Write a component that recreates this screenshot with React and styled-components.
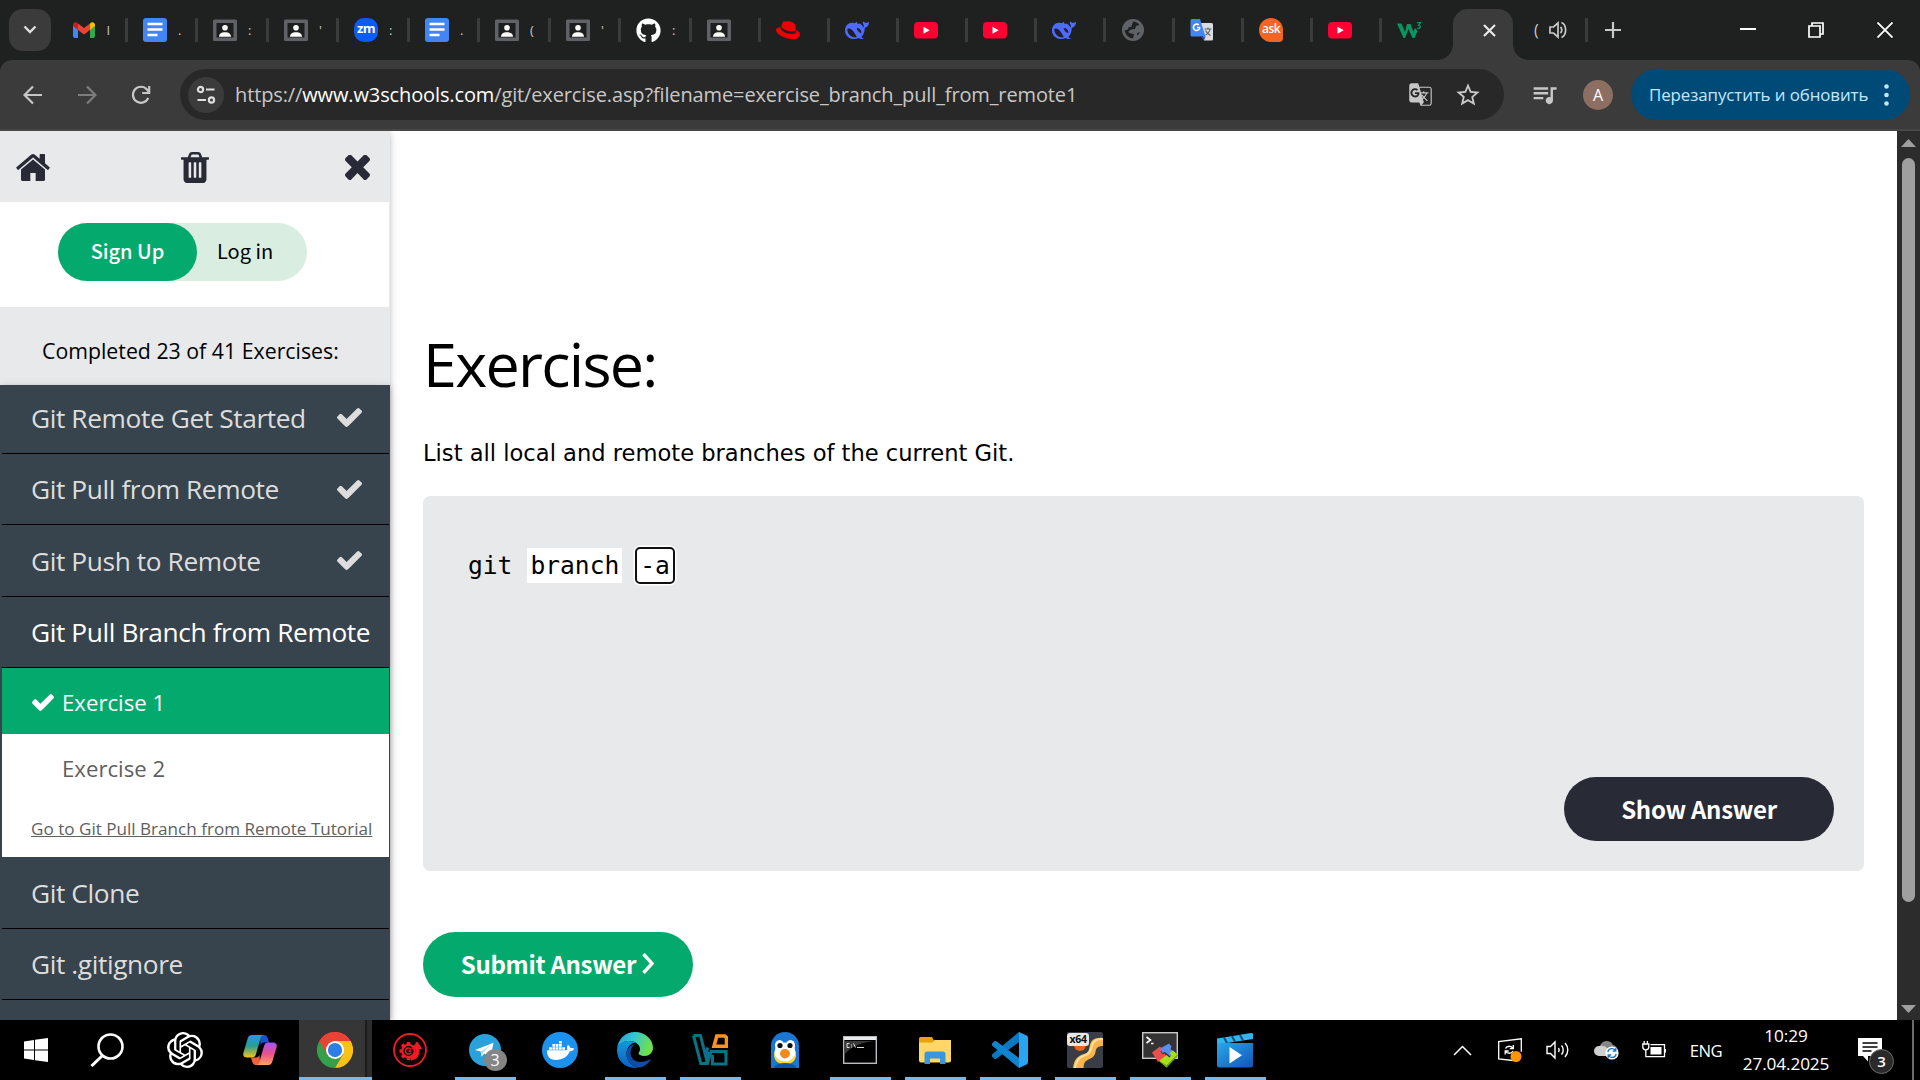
import React from 'react';
import styled, { createGlobalStyle, css } from 'styled-components';
import { FaGithub, FaRedhat, FaDocker } from 'react-icons/fa';
import { MdQueueMusic, MdStarBorder, MdOutlineGTranslate } from 'react-icons/md';
import { SiOpenai } from 'react-icons/si';
import * as Si from 'react-icons/si';

const UI = "'Open Sans', 'Noto Sans', sans-serif";
const SOURCE = "'Noto Sans CJK SC', 'Open Sans', sans-serif";
const GREEN = '#04aa6d';

const Global = createGlobalStyle`
  *, *::before, *::after { box-sizing: border-box; }
  html, body { margin: 0; padding: 0; overflow: hidden; background: #000; }
  svg { display: block; flex: none; }
`;

const Screen = styled.div`
  width: 1920px;
  height: 1080px;
  display: flex;
  flex-direction: column;
  overflow: hidden;
  font-family: ${UI};
  background: #1f2120;
`;

/* ---------- tab strip ---------- */

const TabStrip = styled.div`
  height: 60px;
  flex: none;
  display: flex;
  align-items: center;
  padding-left: 9px;
  background: #1f2120;
`;

const TabSearch = styled.div`
  width: 42px;
  height: 42px;
  margin-right: 5.5px;
  border-radius: 14px;
  background: #3b3b3b;
  display: flex;
  align-items: center;
  justify-content: center;
`;

const Tab = styled.div`
  width: ${(p) => p.$w}px;
  height: 24px;
  flex: none;
  display: flex;
  align-items: center;
  padding-left: 15px;
  border-right: 3px solid ${(p) => (p.$last ? 'transparent' : '#3b3b3b')};
`;

const TabHint = styled.span`
  width: 4px;
  margin-left: 11px;
  overflow: hidden;
  font-size: 13px;
  line-height: 24px;
  color: #c8c8c8;
`;

const ActiveTab = styled.div`
  width: 60px;
  height: 51px;
  margin: 9px 0 0 2.5px;
  flex: none;
  position: relative;
  display: flex;
  align-items: center;
  justify-content: flex-end;
  padding: 0 17px 9px 0;
  border-radius: 15px 15px 0 0;
  background: #3b3b3b;
  &::before, &::after {
    content: '';
    position: absolute;
    bottom: 0;
    width: 15px;
    height: 15px;
  }
  &::before { left: -15px; background: radial-gradient(circle at 0 0, transparent 14.5px, #3b3b3b 15px); }
  &::after { right: -15px; background: radial-gradient(circle at 100% 0, transparent 14.5px, #3b3b3b 15px); }
`;

const AudioTab = styled.div`
  width: 75px;
  height: 24px;
  flex: none;
  display: flex;
  align-items: center;
  padding-left: 21px;
  gap: 10px;
  border-right: 3px solid #3b3b3b;
  color: #c8c8c8;
  font-size: 16px;
`;

const NewTab = styled.div`
  width: 49px;
  display: flex;
  justify-content: center;
`;

const WindowControls = styled.div`
  margin-left: auto;
  margin-right: 1px;
  display: flex;
  align-items: center;
`;

const WinButton = styled.div`
  width: 68.5px;
  display: flex;
  justify-content: center;
`;

/* ---------- toolbar ---------- */

const Toolbar = styled.div`
  height: 71px;
  flex: none;
  display: flex;
  align-items: center;
  padding: 0 10px 0 6px;
  border-radius: 12px 12px 0 0;
  border-bottom: 2px solid #474747;
  background: #3b3b3b;
`;

const NavButton = styled.div`
  width: 54px;
  display: flex;
  justify-content: center;
`;

const Omnibox = styled.div`
  width: 1324px;
  height: 51px;
  margin-left: 12px;
  padding-left: 8px;
  border-radius: 26px;
  background: #282828;
  display: flex;
  align-items: center;
`;

const SiteInfo = styled.div`
  width: 36px;
  height: 36px;
  border-radius: 50%;
  background: #3b3b3b;
  display: flex;
  align-items: center;
  justify-content: center;
`;

const Url = styled.div`
  margin-left: 11px;
  font-size: 20px;
  line-height: 28px;
  letter-spacing: -0.125px;
  white-space: pre;
  color: #c7c7c7;
  b { font-weight: 400; color: #fff; }
`;

const OmniActions = styled.div`
  margin-left: auto;
  margin-right: 22px;
  display: flex;
  align-items: center;
  gap: 20px;
  color: #c7c7c7;
`;

const MediaButton = styled.div`
  margin-left: 26px;
  color: #c7c7c7;
`;

const Avatar = styled.div`
  width: 30px;
  height: 30px;
  margin-left: 24px;
  border-radius: 50%;
  background: #8d6e63;
  color: #fff;
  font-size: 16px;
  display: flex;
  align-items: center;
  justify-content: center;
`;

const RestartButton = styled.div`
  width: 279px;
  height: 51px;
  margin-left: auto;
  padding: 0 21px 0 18px;
  border-radius: 26px;
  background: #004a77;
  color: #c2e7ff;
  font-size: 16.9px;
  letter-spacing: -0.1px;
  white-space: nowrap;
  display: flex;
  align-items: center;
  justify-content: space-between;
`;

/* ---------- page ---------- */

const Page = styled.div`
  height: 889px;
  flex: none;
  display: flex;
  overflow: hidden;
  background: #fff;
`;

const Sidebar = styled.aside`
  width: 390px;
  flex: none;
  z-index: 1;
  display: flex;
  flex-direction: column;
  background: #e7e9eb;
  box-shadow: 0 2px 5px rgba(0, 0, 0, 0.16), 0 2px 10px rgba(0, 0, 0, 0.12);
`;

const SidebarTop = styled.div`
  height: 71px;
  flex: none;
  display: flex;
  align-items: center;
  justify-content: space-between;
  padding: 1px 20px 0 16px;
  color: #282a35;
  svg:nth-child(2) { margin-left: -5px; }
`;

const Auth = styled.div`
  height: 105px;
  flex: none;
  display: flex;
  padding: 21px 0 0 58px;
  margin-right: 1px;
  background: #fff;
  font-family: ${SOURCE};
  font-size: 20px;
  line-height: 55px;
`;

const AuthPill = styled.div`
  width: 249px;
  height: 58px;
  display: flex;
  border-radius: 29px;
  background: #d9eee1;
  color: #000;
`;

const SignUp = styled.div`
  width: 139px;
  border-radius: 29px;
  text-align: center;
  font-weight: 500;
  background: ${GREEN};
  color: #fff;
`;

const LogIn = styled.div`
  padding-left: 20px;
`;

const Progress = styled.div`
  height: 78px;
  flex: none;
  padding: 27px 0 0 42px;
  font-size: 21.3px;
  line-height: 34px;
  white-space: nowrap;
`;

const Menu = styled.div`
  flex: 1;
  padding: 0 1px 0 2px;
  background: #38444d;
  box-shadow: 0 2px 5px rgba(0, 0, 0, 0.16), 0 2px 10px rgba(0, 0, 0, 0.12);
`;

const MenuItem = styled.div`
  height: ${(p) => p.$h}px;
  display: flex;
  align-items: center;
  justify-content: space-between;
  padding: 0 27px 0 29px;
  border-bottom: 1px solid #000;
  font-size: 26.3px;
  letter-spacing: -0.4px;
  white-space: nowrap;
  color: ${(p) => (p.$open ? '#fff' : '#ddd')};
  &:first-child { padding-bottom: 3px; }
`;

const SubItem = styled.div`
  height: 66px;
  display: flex;
  align-items: center;
  padding: 2px 0 0 ${(p) => (p.$active ? 30 : 60)}px;
  gap: 8px;
  font-size: 22.2px;
  background: ${(p) => (p.$active ? GREEN : '#fff')};
  color: ${(p) => (p.$active ? '#fff' : '#5f5f5f')};
`;

const TutorialLink = styled.div`
  height: 57px;
  padding: 12px 0 0 29px;
  background: #fff;
  color: #5f5f5f;
  font-size: 17.1px;
  line-height: 33px;
  text-decoration: underline;
  white-space: nowrap;
`;

const Main = styled.main`
  flex: 1;
  display: flex;
  flex-direction: column;
  padding: 193px 33px 0 33px;
`;

const Title = styled.h1`
  margin: 0;
  font-size: 61px;
  font-weight: 400;
  line-height: 80px;
  letter-spacing: -1.7px;
`;

const Task = styled.p`
  margin: 31px 0 25px;
  font-family: 'DejaVu Sans', sans-serif;
  font-size: 22.6px;
  line-height: 36px;
`;

const CodeBox = styled.div`
  height: 375px;
  flex: none;
  display: flex;
  flex-direction: column;
  justify-content: space-between;
  padding: 50px 30px 30px 45px;
  border-radius: 7px;
  background: #e7e9eb;
`;

const CodeLine = styled.div`
  height: 38px;
  display: flex;
  align-items: center;
  gap: 15px;
  font-family: 'DejaVu Sans Mono', monospace;
  font-size: 24.6px;
  line-height: 35px;
`;

const Blank = styled.span`
  padding: 0 3px;
  background: #fff;
  ${(p) => p.$focus && css`
    margin-left: -2px;
    padding: 0 3px;
    line-height: 33px;
    border: 2px solid #101010;
    border-radius: 5px;
    box-shadow: 0 0 0 1.5px #fff;
  `}
`;

const PillButton = styled.div`
  width: 270px;
  height: ${(p) => p.$h}px;
  display: flex;
  align-items: center;
  justify-content: center;
  align-self: ${(p) => p.$align};
  gap: 6px;
  padding-bottom: 2px;
  border-radius: 33px;
  background: ${(p) => p.$bg};
  color: #fff;
  font-family: ${SOURCE};
  font-size: 24px;
  font-weight: 700;
  letter-spacing: -0.3px;
  margin-top: ${(p) => p.$top || 0}px;
`;

const Scrollbar = styled.div`
  width: 23px;
  flex: none;
  display: flex;
  flex-direction: column;
  align-items: center;
  padding: 8px 0 7px;
  background: #2c2c2c;
`;

const Thumb = styled.div`
  width: 13px;
  height: 744px;
  margin: 11px 0 auto;
  border-radius: 7px;
  background: #9f9f9f;
`;

/* ---------- taskbar ---------- */

const Taskbar = styled.div`
  height: 60px;
  flex: none;
  display: flex;
  background: #000;
  color: #fff;
`;

const Slot = styled.div`
  width: ${(p) => p.$w || 75}px;
  height: 60px;
  flex: none;
  position: relative;
  display: flex;
  align-items: center;
  justify-content: center;
  ${(p) => p.$running && css`
    &::after {
      content: '';
      position: absolute;
      left: 7px;
      right: 7px;
      bottom: 0;
      height: 3px;
      background: #76b9ed;
    }
  `}
`;

const SearchSlot = styled(Slot)`
  padding-right: 5px;
`;

const FocusedSlot = styled.div`
  width: 73px;
  height: 60px;
  margin: 0 1px;
  flex: none;
  display: flex;
  align-items: center;
  padding-left: 18px;
  border-bottom: 3px solid #76b9ed;
  background: linear-gradient(90deg, #363636 66px, #1c1c1c 66px 68px, #2c2c2c 68px);
  svg { margin-top: 3px; }
`;

const CountBadge = styled.div`
  position: absolute;
  right: 16px;
  bottom: 9px;
  width: 23px;
  height: 22px;
  border-radius: 50%;
  background: #858585;
  font-size: 16px;
  line-height: 22px;
  text-align: center;
`;

const Tray = styled.div`
  margin-left: auto;
  display: flex;
  align-items: center;
`;

const TrayIcon = styled.div`
  width: 48px;
  display: flex;
  justify-content: center;
`;

const Lang = styled.div`
  width: 56px;
  text-align: center;
  font-size: 16.7px;
  letter-spacing: -0.5px;
`;

const Clock = styled.div`
  width: 104px;
  display: flex;
  flex-direction: column;
  text-align: center;
  font-size: 17.2px;
  line-height: 28px;
  letter-spacing: -0.1px;
`;

const Notice = styled.div`
  width: 74px;
  height: 60px;
  position: relative;
  padding: 18px 0 0 20px;
`;

const NoticeBadge = styled.div`
  position: absolute;
  left: 31px;
  top: 29px;
  width: 25px;
  height: 25px;
  border-radius: 50%;
  border: 1px solid #6b6b6b;
  background: #2a2a2a;
  font-size: 15px;
  font-weight: 600;
  line-height: 23px;
  text-align: center;
`;

const DesktopEdge = styled.div`
  width: 8px;
  height: 60px;
  border-left: 2px solid #6b6b6b;
`;

/* ---------- icons ---------- */

const Stroke = ({ w = 24, h = 24, sw = 2, c = '#fff', d, vb }) => (
  <svg width={w} height={h} viewBox={vb || `0 0 ${w} ${h}`} fill="none" stroke={c} strokeWidth={sw}>
    <path d={d} />
  </svg>
);

const FA_PATHS = {
  home: 'M1472 992v480q0 26-19 45t-45 19h-384v-384h-256v384h-384q-26 0-45-19t-19-45v-480q0-1 .5-3t.5-3l575-474 575 474q1 2 1 6zm223-69l-62 74q-8 9-21 11h-3q-13 0-21-7l-692-577-692 577q-12 8-24 7-13-2-21-11l-62-74q-8-10-7-23.5t11-21.5l719-599q32-26 76-26t76 26l244 204v-195q0-14 9-23t23-9h192q14 0 23 9t9 23v408l219 182q10 8 11 21.5t-7 23.5z',
  trash: 'M704 1376v-704q0-14-9-23t-23-9h-64q-14 0-23 9t-9 23v704q0 14 9 23t23 9h64q14 0 23-9t9-23zm256 0v-704q0-14-9-23t-23-9h-64q-14 0-23 9t-9 23v704q0 14 9 23t23 9h64q14 0 23-9t9-23zm256 0v-704q0-14-9-23t-23-9h-64q-14 0-23 9t-9 23v704q0 14 9 23t23 9h64q14 0 23-9t9-23zm-544-992h448l-48-117q-7-9-17-11h-317q-10 2-17 11zm928 32v64q0 14-9 23t-23 9h-96v948q0 83-47 143.5t-113 60.5h-832q-66 0-113-58.5t-47-141.5v-952h-96q-14 0-23-9t-9-23v-64q0-14 9-23t23-9h309l70-167q15-37 54-63t79-26h320q40 0 79 26t54 63l70 167h309q14 0 23 9t9 23z',
  times: 'M1490 1322q0 40-28 68l-136 136q-28 28-68 28t-68-28l-294-294-294 294q-28 28-68 28t-68-28l-136-136q-28-28-28-68t28-68l294-294-294-294q-28-28-28-68t28-68l136-136q28-28 68-28t68 28l294 294 294-294q28-28 68-28t68 28l136 136q28 28 28 68t-28 68l-294 294 294 294q28 28 28 68z',
  check: 'M1671 566q0 40-28 68l-724 724-136 136q-28 28-68 28t-68-28l-136-136-362-362q-28-28-28-68t28-68l136-136q28-28 68-28t68 28l294 295 656-657q28-28 68-28t68 28l136 136q28 28 28 68z',
};
const FA_BOXES = {
  home: '80 253 1632 1283',
  trash: '192 128 1408 1536',
  times: '302 384 1188 1170',
  check: '121 334 1550 1188',
};
const Fa = ({ name, w, h }) => (
  <svg width={w} height={h} viewBox={FA_BOXES[name]} fill="currentColor" preserveAspectRatio="none">
    <path d={FA_PATHS[name]} />
  </svg>
);

const Gmail = () => (
  <svg width="24" height="24" viewBox="0 0 24 24">
    <path d="M1 7.5V18a2 2 0 0 0 2 2h3V10z" fill="#4285f4" />
    <path d="M18 10v10h3a2 2 0 0 0 2-2V7.500z" fill="#34a853" />
    <path d="M6 5.500v6.500l6 4.500 6-4.500V5.500l-6 4.500z" fill="#ea4335" />
    <path d="M1 7v1l5 4V5.500L5 4.700C3.300 3.400 1 4.700 1 7z" fill="#c5221f" />
    <path d="M23 7v1l-5 4V5.500l1-.8C20.700 3.400 23 4.700 23 7z" fill="#fbbc04" />
  </svg>
);
const Docs = () => (
  <svg width="24" height="24" viewBox="0 0 24 24">
    <rect width="24" height="24" rx="3" fill="#4285f4" />
    <path d="M4.500 6h15M4.500 11.500h15M4.500 17h10" stroke="#fff" strokeWidth="2.300" />
  </svg>
);
const Contact = () => (
  <svg width="24" height="24" viewBox="0 0 24 24">
    <rect x="0" y="1.500" width="24" height="21.500" rx="1.500" fill="#5f6368" />
    <rect x="3.500" y="5" width="17" height="14.500" fill="#1d1f1f" />
    <circle cx="12" cy="9.800" r="2.800" fill="#fff" />
    <path d="M6 18.700c0-3.200 2.600-4.500 6-4.500s6 1.300 6 4.500z" fill="#fff" />
  </svg>
);
const ZmBadge = styled.div`
  width: 24px;
  height: 24px;
  flex: none;
  border-radius: 10px;
  background: #0b5cff;
  color: #fff;
  font: 700 13px/21px ${UI};
  letter-spacing: -0.6px;
  text-align: center;
`;
const AskBadge = styled(ZmBadge)`
  border-radius: 12px 12px 4px 12px;
  background: #f26522;
  font-size: 12px;
  font-weight: 600;
`;
const YouTube = () => (
  <svg width="24" height="24" viewBox="0 0 24 24">
    <rect y="4" width="24" height="16.500" rx="4" fill="#ff0033" />
    <path d="M9.500 8.700v7l6.200-3.500z" fill="#fff" />
  </svg>
);
const Whale = () => (Si.SiDeepseek ? <Si.SiDeepseek size={24} color="#4d6bfe" /> : (
  <svg width="24" height="24" viewBox="0 0 24 24">
    <path d="M14.500 5.500c2 1 3 2.200 4 4 .6-1 .5-2-.3-3.200-.6-1-.4-2 0-3 1 1.200 2 1.700 3 1.700 1 0 2-.5 2.800-1.200.2 3-1.500 5.500-4.200 5.900 0 4-1.200 7-3.500 9.300.8.8 1.700 1.200 2.600 1.500-2 1-4 .5-5.200-.4C7.500 23 0 19.500 0 12.500 0 6.500 5 3.500 9.500 5.200l2.500-1.400c-.2 1 .2 1.700 1 2.200z" fill="#4d6bfe" />
    <path d="M2.300 11c4-2 7 3.500 9.500 8.200C6.500 20 2.300 16.500 2.300 11z" fill="#1f2120" />
    <path d="M11.500 10.500c2.500-.8 5 1.500 4.800 4.500-1.200.2-3.800-2-4.800-4.500z" fill="#1f2120" />
  </svg>
));
const Globe = () => (
  <svg width="24" height="24" viewBox="0 0 24 24">
    <circle cx="12" cy="12" r="11" fill="#5f6368" />
    <path d="M12 3.500c2.500 0 5 1.500 6.500 3.500l-3.500 1-1 3-4 .5L7 14l3 1.500 3 .5-1 4.500c-4-.5-8-3.500-8.500-8.500 2 .5 4-.5 4-2.500l3-1zM16 15l3-1-2.500 4z" fill="#1f2120" />
  </svg>
);
const GoogleTranslate = () => (
  <svg width="24" height="24" viewBox="0 0 24 24">
    <path d="M10 5h11.500A1.500 1.500 0 0 1 23 6.500V21a1.500 1.500 0 0 1-1.500 1.500H14z" fill="#dadce0" />
    <path d="M2 1h8l5.500 17.500H2A1.500 1.500 0 0 1 .5 17V2.500A1.500 1.500 0 0 1 2 1z" fill="#4285f4" />
    <path d="M15.500 18.500H11l3 4z" fill="#3749ab" />
    <path d="M9.800 9.500H7M9.800 9.500A3.200 3.200 0 1 1 8.800 7" stroke="#fff" strokeWidth="1.600" fill="none" />
    <path d="M14.500 11h7M18 9.500V11M20 11c-.5 3-2.500 5-4.500 6M15.500 12.500c1 2 2.500 3.500 5 5" stroke="#5f6368" strokeWidth="1.200" fill="none" />
  </svg>
);
const W3 = () => (
  <svg width="25" height="24" viewBox="0 0 25 24">
    <path d="M0 5.500h4.500l3.500 8.500 2-8h3.500l3 8 1.500-4 2.500 3L17.500 20h-2l-4-9-3.500 9H6.500z" fill="#059862" />
    <path d="M20 4.700h3.300l-1.700 2.600c3 .3 2 4-1.500 3" stroke="#059862" strokeWidth="1.300" fill="none" />
  </svg>
);
const Speaker = () => (
  <svg width="19" height="18" viewBox="0 0 19 18" fill="none" stroke="#c8c8c8" strokeWidth="1.700">
    <path d="M1 6v6h3.500L9 16V2L4.500 6z" />
    <path d="M11.500 6c1.700 1.500 1.700 4.500 0 6M12.500 1.500c5.500 2.500 5.500 12.500 0 15" />
  </svg>
);
const Tune = () => (
  <svg width="20" height="20" viewBox="0 0 20 20" fill="none" stroke="#dedede" strokeWidth="2.200">
    <circle cx="4.500" cy="4.500" r="2.600" />
    <path d="M10 4.500h8.500M1.500 15H10" />
    <circle cx="15.500" cy="15" r="2.600" />
  </svg>
);
const Arrow = ({ flip, c }) => (
  <svg width="20" height="20" viewBox="0 0 20 20" fill="none" stroke={c} strokeWidth="2.200" transform={flip ? 'scale(-1 1)' : undefined}>
    <path d="M19 10H2M10 1.500L1.500 10l8.500 8.500" />
  </svg>
);
const Reload = () => (
  <svg width="20" height="20" viewBox="0 0 20 20" fill="none" stroke="#c7c7c7" strokeWidth="2.200">
    <path d="M17.300 13A8 8 0 1 1 16 4.500l2 2.500" />
    <path d="M18.200 1v7h-7" />
  </svg>
);
const Windows = () => (
  <svg width="24" height="24" viewBox="0 0 24 24" fill="#fff">
    <path d="M0 3.400l10-1.400v9.500H0zM11 1.800L24 0v11.500H11zM0 12.500h10V22L0 20.600zM11 12.500h13V24l-13-1.800z" />
  </svg>
);
const Copilot = () => (
  <svg width="34" height="32" viewBox="0 0 34 32">
    <defs>
      <linearGradient id="cpA" x1="0" y1="0" x2="0" y2="1">
        <stop offset="0" stopColor="#1d9bf0" /><stop offset=".5" stopColor="#2a9d8f" /><stop offset="1" stopColor="#f5c518" />
      </linearGradient>
      <linearGradient id="cpB" x1="0" y1="0" x2="0" y2="1">
        <stop offset="0" stopColor="#a855f7" /><stop offset=".5" stopColor="#ec4f8c" /><stop offset="1" stopColor="#ffa25e" />
      </linearGradient>
    </defs>
    <path d="M17 1h4c2 0 3 1 3.700 3l1.300 4.500h-5c-2 0-3 1-3.500 3z" fill="#1b4fd1" />
    <path d="M17 31h-4c-2 0-3-1-3.700-3L8 23.500h5c2 0 3-1 3.500-3z" fill="#f2603c" />
    <path d="M9 1h12c-2 0-3 1.500-3.500 3.500L13 20c-.8 2.500-2 3.500-4 3.500H4c-3 0-4.500-2-3.500-5L4.500 5C5.500 2 6.500 1 9 1z" fill="url(#cpA)" />
    <path d="M25 31H13c2 0 3-1.500 3.500-3.500L21 12c.8-2.500 2-3.500 4-3.500h5c3 0 4.500 2 3.500 5L29.500 27c-1 3-2 4-4.500 4z" fill="url(#cpB)" />
  </svg>
);
const Chrome = () => (
  <svg width="36" height="36" viewBox="0 0 48 48">
    <path d="M24 24L3.200 12A24 24 0 0 1 44.800 12z" fill="#ea4335" />
    <path d="M24 24L3.200 12A24 24 0 0 0 24 48l10.400-18z" fill="#34a04a" />
    <path d="M24 12h20.800A24 24 0 0 1 24 48l10.400-18z" fill="#fbc116" />
    <path d="M24 12h20.800a24 24 0 0 0-41.600 0l10.400 18z" fill="#ea4335" />
    <circle cx="24" cy="24" r="12" fill="#fff" />
    <circle cx="24" cy="24" r="9.500" fill="#2f7de9" />
  </svg>
);
const RedGear = () => (
  <svg width="34" height="34" viewBox="0 0 34 34" fill="none" stroke="#ec1c24">
    <circle cx="17" cy="17" r="16" strokeWidth="1.800" fill="#100405" />
    <circle cx="15.500" cy="18" r="6.200" strokeWidth="2.200" />
    <path d="M15.500 9v3M9.100 11.600l2.200 2.200M6.500 18h3M9.100 24.400l2.200-2.200M15.500 27v-3" strokeWidth="3.600" />
    <path d="M18 16.500a3 3 0 1 0 0 3.200M15.500 18h3" strokeWidth="1.500" />
    <path d="M17.500 25.500C23 25 25 21 24.500 15" strokeWidth="4" />
    <path d="M19.500 15.500L24 9l4.500 6.500z" fill="#ec1c24" strokeWidth="1" />
  </svg>
);
const Telegram = () => (
  <svg width="32" height="32" viewBox="0 0 32 32">
    <circle cx="16" cy="16" r="16" fill="#2aa1da" />
    <path d="M6 16L24.500 8.800 21.500 24l-6-4.500-3 3-.8-5z" fill="#fff" />
    <path d="M11.700 17.500L21 11.500l-7 7-1.500 4z" fill="#b9d9ec" />
  </svg>
);
const DockerCircle = styled.div`
  width: 36px;
  height: 36px;
  border-radius: 50%;
  background: #1d91ee;
  display: flex;
  align-items: center;
  justify-content: center;
`;
const Edge = () => (
  <svg width="36" height="36" viewBox="0 0 36 36">
    <defs>
      <linearGradient id="edA" x1="0" y1="0" x2="1" y2=".3">
        <stop offset="0" stopColor="#1d9de2" /><stop offset=".5" stopColor="#36c6d0" /><stop offset="1" stopColor="#6fe04a" />
      </linearGradient>
      <linearGradient id="edB" x1="0" y1="0" x2="0" y2="1">
        <stop offset="0" stopColor="#1796dc" /><stop offset="1" stopColor="#0b60c0" />
      </linearGradient>
    </defs>
    <path d="M0 17C1 7 8 0 18 0s18 7.500 18 15.500c0 5.500-4 8.500-8.500 8.500-4 0-6-1.500-6-2.700 0-1 1.500-1.800 1.500-4.300 0-4.500-5-8-11-8C6.500 9 1.500 12 0 17z" fill="url(#edA)" />
    <path d="M0 17c1.500-5.500 6.500-8 12-8 3 0 5 .8 6.500 1.700C13 11 9.500 16 9.500 22c0 7 5.500 12.500 12 13.500C10 38 0 29.500 0 18z" fill="url(#edB)" />
    <path d="M18.500 12.500c-3 1.500-5 4.500-5 8.500 0 5.500 4.500 9 9.500 9 4 0 7-1 9.500-2.500.6-.4 1.200.2.700.9C30.500 32 26 35.500 21.500 35.500 15 34.500 9.500 29 9.500 22c0-5 4-9.300 9-9.500z" fill="#0d4ea6" />
    <path d="M18.500 12.500c2.500 1 4 2.500 4 4.800 0 2-1.500 3-1.500 4.200 0 2 3 3.700 7 3.500-4 3.500-14 1-14-5.500 0-3 1.500-6 4.500-7z" fill="#000" />
  </svg>
);
const VBox = () => (
  <svg width="36" height="32" viewBox="0 0 36 32" fill="none">
    <path d="M1.500 1.500h7l5 20 2.200-8M1.500 1.500L8.800 29.500h6.700L19 17.500h15V21M14 30l3.500-12" stroke="#0b7285" strokeWidth="3" />
    <path d="M34 19v11h-7.500M20.500 21v9h7" stroke="#0b7285" strokeWidth="3" />
    <path d="M22 12.200L24.800 2h8l1.700 1.500v8.700z" stroke="#f7931e" strokeWidth="3.600" />
  </svg>
);
const Penguin = () => (
  <svg width="28" height="36" viewBox="0 0 28 36">
    <path d="M0 36V14a14 14 0 0 1 28 0v22z" fill="#1976d2" />
    <ellipse cx="14" cy="23" rx="11" ry="10" fill="#fdd835" />
    <ellipse cx="14" cy="20" rx="10.500" ry="9.500" fill="#fff" />
    <ellipse cx="8.500" cy="13.500" rx="4.500" ry="5.500" fill="#fff" />
    <ellipse cx="19.500" cy="13.500" rx="4.500" ry="5.500" fill="#fff" />
    <circle cx="9" cy="13.500" r="2.600" fill="#111" />
    <circle cx="19" cy="13.500" r="2.600" fill="#111" />
    <path d="M14 17c3 0 5 2.500 5 4.500S16.500 26.500 14 26.500 9 24 9 21.500 11 17 14 17z" fill="#f08c1a" />
    <path d="M3 36a11 5 0 0 1 22 0z" fill="#0d55a8" />
  </svg>
);
const Cmd = () => (
  <svg width="34" height="28" viewBox="0 0 34 28">
    <rect x=".7" y=".7" width="32.600" height="26.600" fill="#000" stroke="#b8bcc0" strokeWidth="1.400" />
    <rect x="1" y="1" width="32" height="3" fill="#e8eaec" />
    <path d="M2 5h30c-12 1-24 5-30 13z" fill="#3a3a3a" />
    <path d="M6.500 7.500H4v4h2.500M8.500 8.500v1M8.500 10.500v1M10.500 7.500l2 4M14 11.500h7" stroke="#ddd" strokeWidth="1" fill="none" />
  </svg>
);
const Folder = () => (
  <svg width="32" height="27" viewBox="0 0 32 27">
    <path d="M0 1.500A1.500 1.500 0 0 1 1.500 0H13l2 3.500V8H0z" fill="#e8a20c" />
    <path d="M0 5.500h13.500l2-2.500H32v20.500a2 2 0 0 1-2 2H2a2 2 0 0 1-2-2z" fill="#ffd766" />
    <path d="M5.500 27v-10A2.500 2.500 0 0 1 8 14.500h16a2.500 2.500 0 0 1 2.500 2.500v10H21v-5.500H11V27z" fill="#3a96dd" />
  </svg>
);
const VSCode = () => (
  <svg width="36" height="36" viewBox="0 0 36 36">
    <path d="M27 0L0 22.500c-.6.600-.6 1.500 0 2l2.300 2.200c.6.500 1.300.5 2 0L27 10z" fill="#0b78c4" />
    <path d="M27 36L0 13.500c-.6-.6-.6-1.500 0-2l2.300-2.200c.6-.5 1.300-.5 2 0L27 26z" fill="#1184cf" />
    <path d="M27 0l7.500 3.500A2.500 2.500 0 0 1 36 6v24a2.500 2.500 0 0 1-1.500 2.500L27 36z" fill="#2aa4f0" />
  </svg>
);
const X64Box = styled.div`
  width: 36px;
  height: 36px;
  position: relative;
`;
const X64Label = styled.span`
  position: absolute;
  left: 0;
  top: 1px;
  width: 22px;
  border-radius: 3px;
  background: #e6e6e6;
  color: #111;
  font-size: 10.5px;
  font-weight: 700;
  line-height: 13px;
  letter-spacing: -0.3px;
  text-align: center;
`;
const X64 = () => (
  <X64Box>
    <svg width="36" height="36" viewBox="0 0 36 36">
      <rect width="36" height="36" rx="2" fill="#3a3d46" />
      <circle cx="13" cy="13" r="6" fill="#e8661b" />
      <path d="M6 36c1-8 4-12 11-14 5-1 5-5 6-9 1-5 5-8 13-7v8c-5 0-7 2-7.500 6-1 5-4 6-8 8-3 1.500-4 4-4 8z" fill="#f9b54a" />
      <path d="M8 36c1-7 4-11 9.500-12.500C23 22 24 18 25 13.500 26 9 29 7 36 7" stroke="#fde0a0" strokeWidth="2" fill="none" />
    </svg>
    <X64Label>x64</X64Label>
  </X64Box>
);
const MobaTerm = () => (
  <svg width="36" height="36" viewBox="0 0 36 36">
    <rect x=".7" y=".7" width="34.600" height="25.600" fill="#333" stroke="#c9c9c9" strokeWidth="1.400" />
    <path d="M4.500 5l4 3-4 3M9 11.500h2.500" stroke="#fff" strokeWidth="1.600" fill="none" />
    <path d="M10 20.500l8-6 2.500 2.500-2 2.500 2 2.500 2.500-.5 1 3-8 5.500z" fill="#ee4d4d" />
    <path d="M18 16.500l9-5 2.500 3-1 2.500 5 4-4 4.500-6.500-5.500-2.500 1z" fill="#5b8def" />
    <path d="M17 29l7.500-6 3 2.500 2-2-2-2.500L31 18.500l4.500 4L24.500 35z" fill="#a4e01c" />
    <path d="M17 29l7.500 4L35.500 22.500v1.700L24.500 35.700z" fill="#6fa80c" />
  </svg>
);
const Player = () => (
  <svg width="36" height="36" viewBox="0 0 36 36">
    <defs>
      <linearGradient id="plA" x1="0" y1="0" x2="1" y2="1">
        <stop offset="0" stopColor="#2aa8e8" /><stop offset="1" stopColor="#0f55b8" />
      </linearGradient>
    </defs>
    <path d="M0 6.500L34 1a1.500 1.500 0 0 1 2 1.500V7L0 12.500z" fill="#33b4ee" />
    <path d="M7 5.500l3 5.500M15 4.200l3 5.500M23 3l3 5.500" stroke="#0c4d86" strokeWidth="2" />
    <path d="M0 11h36v22a2.500 2.500 0 0 1-2.500 2.500h-31A2.500 2.500 0 0 1 0 33z" fill="url(#plA)" />
    <path d="M12.500 15v16.500L25 23.300z" fill="#fff" />
  </svg>
);
const UpdateIcon = () => (
  <svg width="24" height="24" viewBox="0 0 24 24" fill="none" stroke="#fff" strokeWidth="1.300">
    <path d="M15 22.500L.7 21V3.500L23.300.8v13" />
    <path d="M7.500 10.500c1.500-3 6-3 7.500 0M15.300 7v3.700h-3.500M15 13c-1.500 3-6 3-7.500 0M7.200 16.500V13h3.500" />
    <circle cx="18" cy="18.500" r="5.500" fill="#ff9500" stroke="none" />
  </svg>
);
const TraySpeaker = () => (
  <svg width="24" height="20" viewBox="0 0 24 20" fill="none" stroke="#fff" strokeWidth="1.400">
    <path d="M1 6.500v7h3.500L9 18V2L4.500 6.500z" />
    <path d="M12.500 8c.8 1.200.8 2.800 0 4M15.500 5.500c2.300 2.500 2.300 6.500 0 9M19 3c3.700 4 3.700 10 0 14" />
  </svg>
);
const Cloud = () => (
  <svg width="25" height="20" viewBox="0 0 25 20">
    <path d="M6 6a7 7 0 0 1 13-1c3 .5 4.500 3 4.500 5L13 13z" fill="#858585" />
    <path d="M5 16a5 5 0 0 1 0-10c4-1 7 0 9 3l6 7z" fill="#cfcfcf" />
    <circle cx="18" cy="13" r="6.600" fill="#fff" />
    <path d="M13.800 12a4.300 4.300 0 0 1 7.800-1.500M21.800 8v3h-3M22.200 14a4.300 4.300 0 0 1-7.800 1.500M14.200 18v-3h3" stroke="#1b75c9" strokeWidth="1.300" fill="none" />
  </svg>
);
const Battery = () => (
  <svg width="24" height="18" viewBox="0 0 24 18" fill="none" stroke="#fff" strokeWidth="1.300">
    <path d="M8.500 3.700h14v12H3.500M23.400 8v3.500M3.800 9v6.700" />
    <rect x="8.500" y="6" width="11" height="7.500" fill="#fff" stroke="none" />
    <path d="M.8 3h6v3c0 3.700-6 3.700-6 0zM2.200 0v3M5.400 0v3" />
  </svg>
);

/* ---------- data ---------- */

const TABS = [
  { icon: <Gmail />, hint: 'I', w: 70.5 },
  { icon: <Docs />, hint: '.', w: 70 },
  { icon: <Contact />, hint: ':', w: 71 },
  { icon: <Contact />, hint: "'", w: 70 },
  { icon: <ZmBadge>zm</ZmBadge>, hint: ':', w: 71 },
  { icon: <Docs />, hint: '.', w: 70 },
  { icon: <Contact />, hint: '(', w: 71 },
  { icon: <Contact />, hint: "'", w: 70 },
  { icon: <FaGithub size={25} color="#fff" />, hint: ':', w: 70.5 },
  { icon: <Contact />, w: 69.5 },
  { icon: <FaRedhat size={24} color="#ee0000" />, w: 69 },
  { icon: <Whale />, w: 69 },
  { icon: <YouTube />, w: 69 },
  { icon: <YouTube />, w: 69 },
  { icon: <Whale />, w: 69 },
  { icon: <Globe />, w: 69 },
  { icon: <GoogleTranslate />, w: 69 },
  { icon: <AskBadge>ask</AskBadge>, w: 69 },
  { icon: <YouTube />, w: 69 },
  { icon: <W3 />, w: 68.5, last: true },
];

const APPS = [
  { icon: <RedGear /> },
  { icon: <Telegram />, running: true, badge: '3' },
  { icon: <DockerCircle><FaDocker size={27} color="#fff" /></DockerCircle> },
  { icon: <Edge />, running: true },
  { icon: <VBox />, running: true },
  { icon: <Penguin /> },
  { icon: <Cmd />, running: true },
  { icon: <Folder />, running: true },
  { icon: <VSCode />, running: true },
  { icon: <X64 />, running: true },
  { icon: <MobaTerm />, running: true },
  { icon: <Player />, running: true },
];

export default function App() {
  return (
    <Screen>
      <Global />
      <TabStrip>
        <TabSearch><Stroke w={14} h={10} sw={2.4} c="#dedede" d="M1.500 1.500L7 7l5.500-5.500" /></TabSearch>
        {TABS.map((t, i) => (
          <Tab key={i} $w={t.w + (i === 0 ? 1 : 0)} $last={t.last}>
            {t.icon}
            {t.hint && <TabHint>{t.hint}</TabHint>}
          </Tab>
        ))}
        <ActiveTab><Stroke w={13} h={13} sw={2.2} c="#e8e8e8" d="M1 1l11 11M12 1L1 12" /></ActiveTab>
        <AudioTab><span>(</span><Speaker /></AudioTab>
        <NewTab><Stroke w={16} h={16} sw={2.200} c="#c8c8c8" d="M8 0v16M0 8h16" /></NewTab>
        <WindowControls>
          <WinButton><Stroke w={16} h={16} sw={2} d="M0 7h16" /></WinButton>
          <WinButton><Stroke w={16} h={16} sw={1.700} d="M1 4h11v11H1zM4 4V1h11v11h-3" /></WinButton>
          <WinButton><Stroke w={16} h={16} sw={1.800} d="M.5.500l15 15M15.500.500l-15 15" /></WinButton>
        </WindowControls>
      </TabStrip>

      <Toolbar>
        <NavButton><Arrow c="#c7c7c7" /></NavButton>
        <NavButton><Arrow c="#7d7d7d" flip /></NavButton>
        <NavButton><Reload /></NavButton>
        <Omnibox>
          <SiteInfo><Tune /></SiteInfo>
          <Url>https://<b>www.w3schools.com</b>/git/exercise.asp?filename=exercise_branch_pull_from_remote1</Url>
          <OmniActions>
            <MdOutlineGTranslate size={27} />
            <MdStarBorder size={28} />
          </OmniActions>
        </Omnibox>
        <MediaButton><MdQueueMusic size={29} /></MediaButton>
        <Avatar>A</Avatar>
        <RestartButton>
          Перезапустить и обновить
          <svg width="5" height="22" viewBox="0 0 5 22" fill="#c2e7ff">
            <circle cx="2.500" cy="2.500" r="2.300" /><circle cx="2.500" cy="11" r="2.300" /><circle cx="2.500" cy="19.500" r="2.300" />
          </svg>
        </RestartButton>
      </Toolbar>

      <Page>
        <Sidebar>
          <SidebarTop>
            <Fa name="home" w={34} h={27} />
            <Fa name="trash" w={28} h={31} />
            <Fa name="times" w={25} h={25} />
          </SidebarTop>
          <Auth>
            <AuthPill>
              <SignUp>Sign Up</SignUp>
              <LogIn>Log in</LogIn>
            </AuthPill>
          </Auth>
          <Progress>Completed 23 of 41 Exercises:</Progress>
          <Menu>
            <MenuItem $h={69}>Git Remote Get Started<Fa name="check" w={25} h={19} /></MenuItem>
            <MenuItem $h={71}>Git Pull from Remote<Fa name="check" w={25} h={19} /></MenuItem>
            <MenuItem $h={72}>Git Push to Remote<Fa name="check" w={25} h={19} /></MenuItem>
            <MenuItem $h={71} $open>Git Pull Branch from Remote</MenuItem>
            <SubItem $active><Fa name="check" w={22} h={17} />Exercise 1</SubItem>
            <SubItem>Exercise 2</SubItem>
            <TutorialLink>Go to Git Pull Branch from Remote Tutorial</TutorialLink>
            <MenuItem $h={72}>Git Clone</MenuItem>
            <MenuItem $h={71}>Git .gitignore</MenuItem>
          </Menu>
        </Sidebar>

        <Main>
          <Title>Exercise:</Title>
          <Task>List all local and remote branches of the current Git.</Task>
          <CodeBox>
            <CodeLine>
              <span>git</span>
              <Blank>branch</Blank>
              <Blank $focus>-a</Blank>
            </CodeLine>
            <PillButton $bg="#282a35" $h={64} $align="flex-end">Show Answer</PillButton>
          </CodeBox>
          <PillButton $bg={GREEN} $h={65} $align="flex-start" $top={61}>
            Submit Answer
            <Stroke w={13} h={21} sw={3.4} d="M1.500 1L10 10.500 1.500 20" />
          </PillButton>
        </Main>

        <Scrollbar>
          <svg width="15" height="8" viewBox="0 0 15 8" fill="#9f9f9f"><path d="M0 8L7.500 0 15 8z" /></svg>
          <Thumb />
          <svg width="15" height="8" viewBox="0 0 15 8" fill="#9f9f9f"><path d="M0 0h15L7.500 8z" /></svg>
        </Scrollbar>
      </Page>

      <Taskbar>
        <Slot $w={72}><Windows /></Slot>
        <SearchSlot $w={75.5}>
          <svg width="34" height="34" viewBox="0 0 34 34" fill="none" stroke="#fff">
            <circle cx="20.500" cy="13.500" r="12" strokeWidth="2.600" />
            <path d="M12.500 22.500L1.500 33" strokeWidth="3" />
          </svg>
        </SearchSlot>
        <Slot><SiOpenai size={36} color="#fff" /></Slot>
        <Slot><Copilot /></Slot>
        <FocusedSlot><Chrome /></FocusedSlot>
        {APPS.map((a, i) => (
          <Slot key={i} $running={a.running}>
            {a.icon}
            {a.badge && <CountBadge>{a.badge}</CountBadge>}
          </Slot>
        ))}
        <Tray>
          <TrayIcon><Stroke w={19} h={11} sw={1.500} d="M1 10l8.500-8.500L18 10" /></TrayIcon>
          <TrayIcon><UpdateIcon /></TrayIcon>
          <TrayIcon><TraySpeaker /></TrayIcon>
          <TrayIcon><Cloud /></TrayIcon>
          <TrayIcon><Battery /></TrayIcon>
          <Lang>ENG</Lang>
          <Clock><span>10:29</span><span>27.04.2025</span></Clock>
          <Notice>
            <svg width="25" height="24" viewBox="0 0 25 24">
              <path d="M0 0h24v18H10v5.500L5 18H0z" fill="#fff" />
              <path d="M4.500 5h15M4.500 9h15M4.500 13h9" stroke="#000" strokeWidth="1.300" />
            </svg>
            <NoticeBadge>3</NoticeBadge>
          </Notice>
          <DesktopEdge />
        </Tray>
      </Taskbar>
    </Screen>
  );
}
